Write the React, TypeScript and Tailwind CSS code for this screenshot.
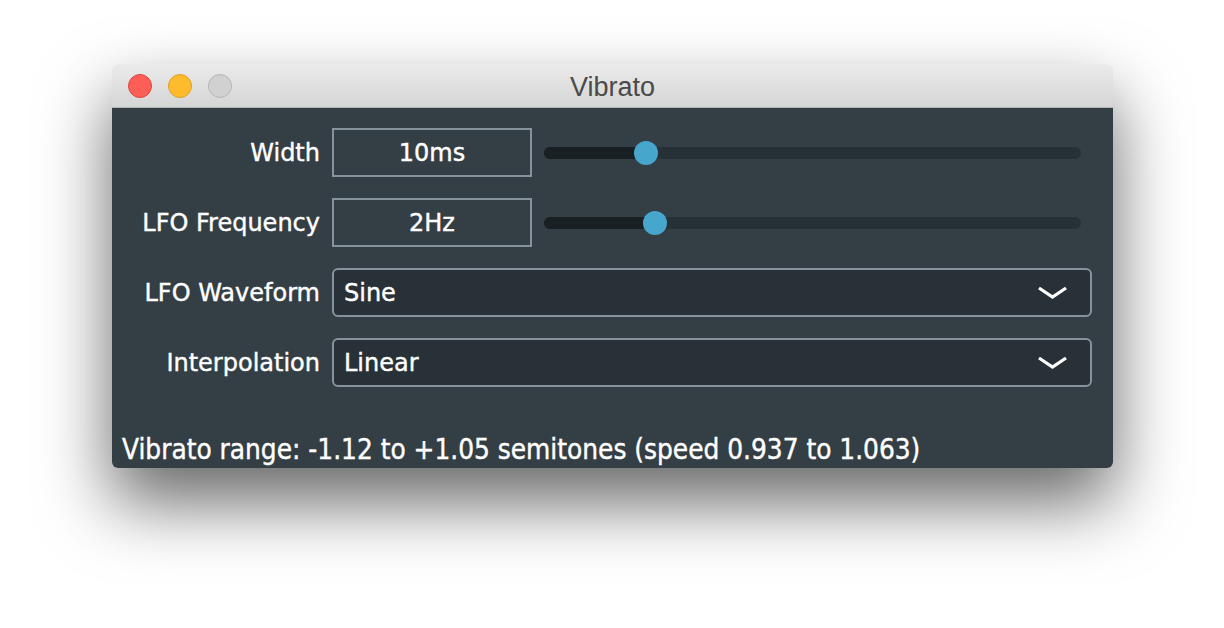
import { ReactNode } from "react";

const label =
  "font-['DejaVu_Sans',sans-serif] text-[24px] text-white [-webkit-text-stroke:0.4px_#ffffff]";

function Row({ name, children }: { name: string; children: ReactNode }) {
  return (
    <div className="flex h-[49px] items-center">
      <div className={`w-[220px] pr-[12px] text-right leading-none ${label}`}>
        {name}
      </div>
      {children}
    </div>
  );
}

function Slider({ value }: { value: number }) {
  const pct = value * 100;
  return (
    <div className="relative ml-[12px] mr-[11px] flex h-[24px] flex-1 items-center">
      <div className="relative h-[12px] w-full rounded-full bg-[#263036]">
        <div
          className="absolute left-0 top-0 h-[12px] rounded-l-full bg-[#192024]"
          style={{ width: `${pct}%` }}
        />
      </div>
      <div
        className="absolute top-0 h-[24px] w-[24px] -translate-x-1/2 rounded-full bg-[#47a6cc]"
        style={{ left: `${pct}%` }}
      />
    </div>
  );
}

function ValueBox({ text }: { text: string }) {
  return (
    <div
      className={`flex h-[49px] w-[200px] items-center justify-center border-2 border-[#87939a] leading-none ${label}`}
    >
      {text}
    </div>
  );
}

function Chevron() {
  return (
    <svg width="31" height="16" viewBox="0 0 31 16" className="shrink-0">
      <path
        d="M2 3 L15.5 12 L29 3"
        fill="none"
        stroke="#ffffff"
        strokeWidth="3.2"
        strokeLinejoin="miter"
      />
    </svg>
  );
}

function Select({ text }: { text: string }) {
  return (
    <div className="flex h-[49px] flex-1 items-center justify-between rounded-[6px] border-2 border-[#87939a] bg-[#283137] pl-[10px] pr-[22px]">
      <span className={`leading-none ${label}`}>{text}</span>
      <Chevron />
    </div>
  );
}

export default function App() {
  return (
    <div className="min-h-[628px] bg-white pl-[112px] pt-[64px]">
      <div className="w-[1001px] overflow-hidden rounded-[6px] shadow-[0_34px_70px_rgba(0,0,0,0.6)]">
        <div className="relative flex h-[44px] items-center border-b border-[#b3b3b3] bg-gradient-to-b from-[#ebebeb] to-[#d5d5d5] pl-[16px]">
          <div className="flex gap-[16px]">
            <span className="h-[24px] w-[24px] rounded-full border border-[#e0443e] bg-[#fd5f57]" />
            <span className="h-[24px] w-[24px] rounded-full border border-[#dea123] bg-[#febb2e]" />
            <span className="h-[24px] w-[24px] rounded-full border border-[#b5b5b5] bg-[#d1d1d1]" />
          </div>
          <div className="absolute inset-0 flex items-center justify-center pt-[4px] font-['Liberation_Sans',sans-serif] text-[27px] text-[#4a4a4a]">
            Vibrato
          </div>
        </div>
        <div className="flex h-[360px] flex-col bg-[#343e45] pr-[21px] pt-[20px]">
          <div className="flex flex-col gap-[21px]">
            <Row name="Width">
              <ValueBox text="10ms" />
              <Slider value={0.19} />
            </Row>
            <Row name="LFO Frequency">
              <ValueBox text="2Hz" />
              <Slider value={0.207} />
            </Row>
            <Row name="LFO Waveform">
              <Select text="Sine" />
            </Row>
            <Row name="Interpolation">
              <Select text="Linear" />
            </Row>
          </div>
          <div className="mt-auto pb-[2px] pl-[10px] font-['DejaVu_Sans_Condensed','Liberation_Sans',sans-serif] text-[27.7px] leading-[32px] text-white [-webkit-text-stroke:0.4px_#ffffff]">
            Vibrato range: -1.12 to +1.05 semitones (speed 0.937 to 1.063)
          </div>
        </div>
      </div>
    </div>
  );
}
